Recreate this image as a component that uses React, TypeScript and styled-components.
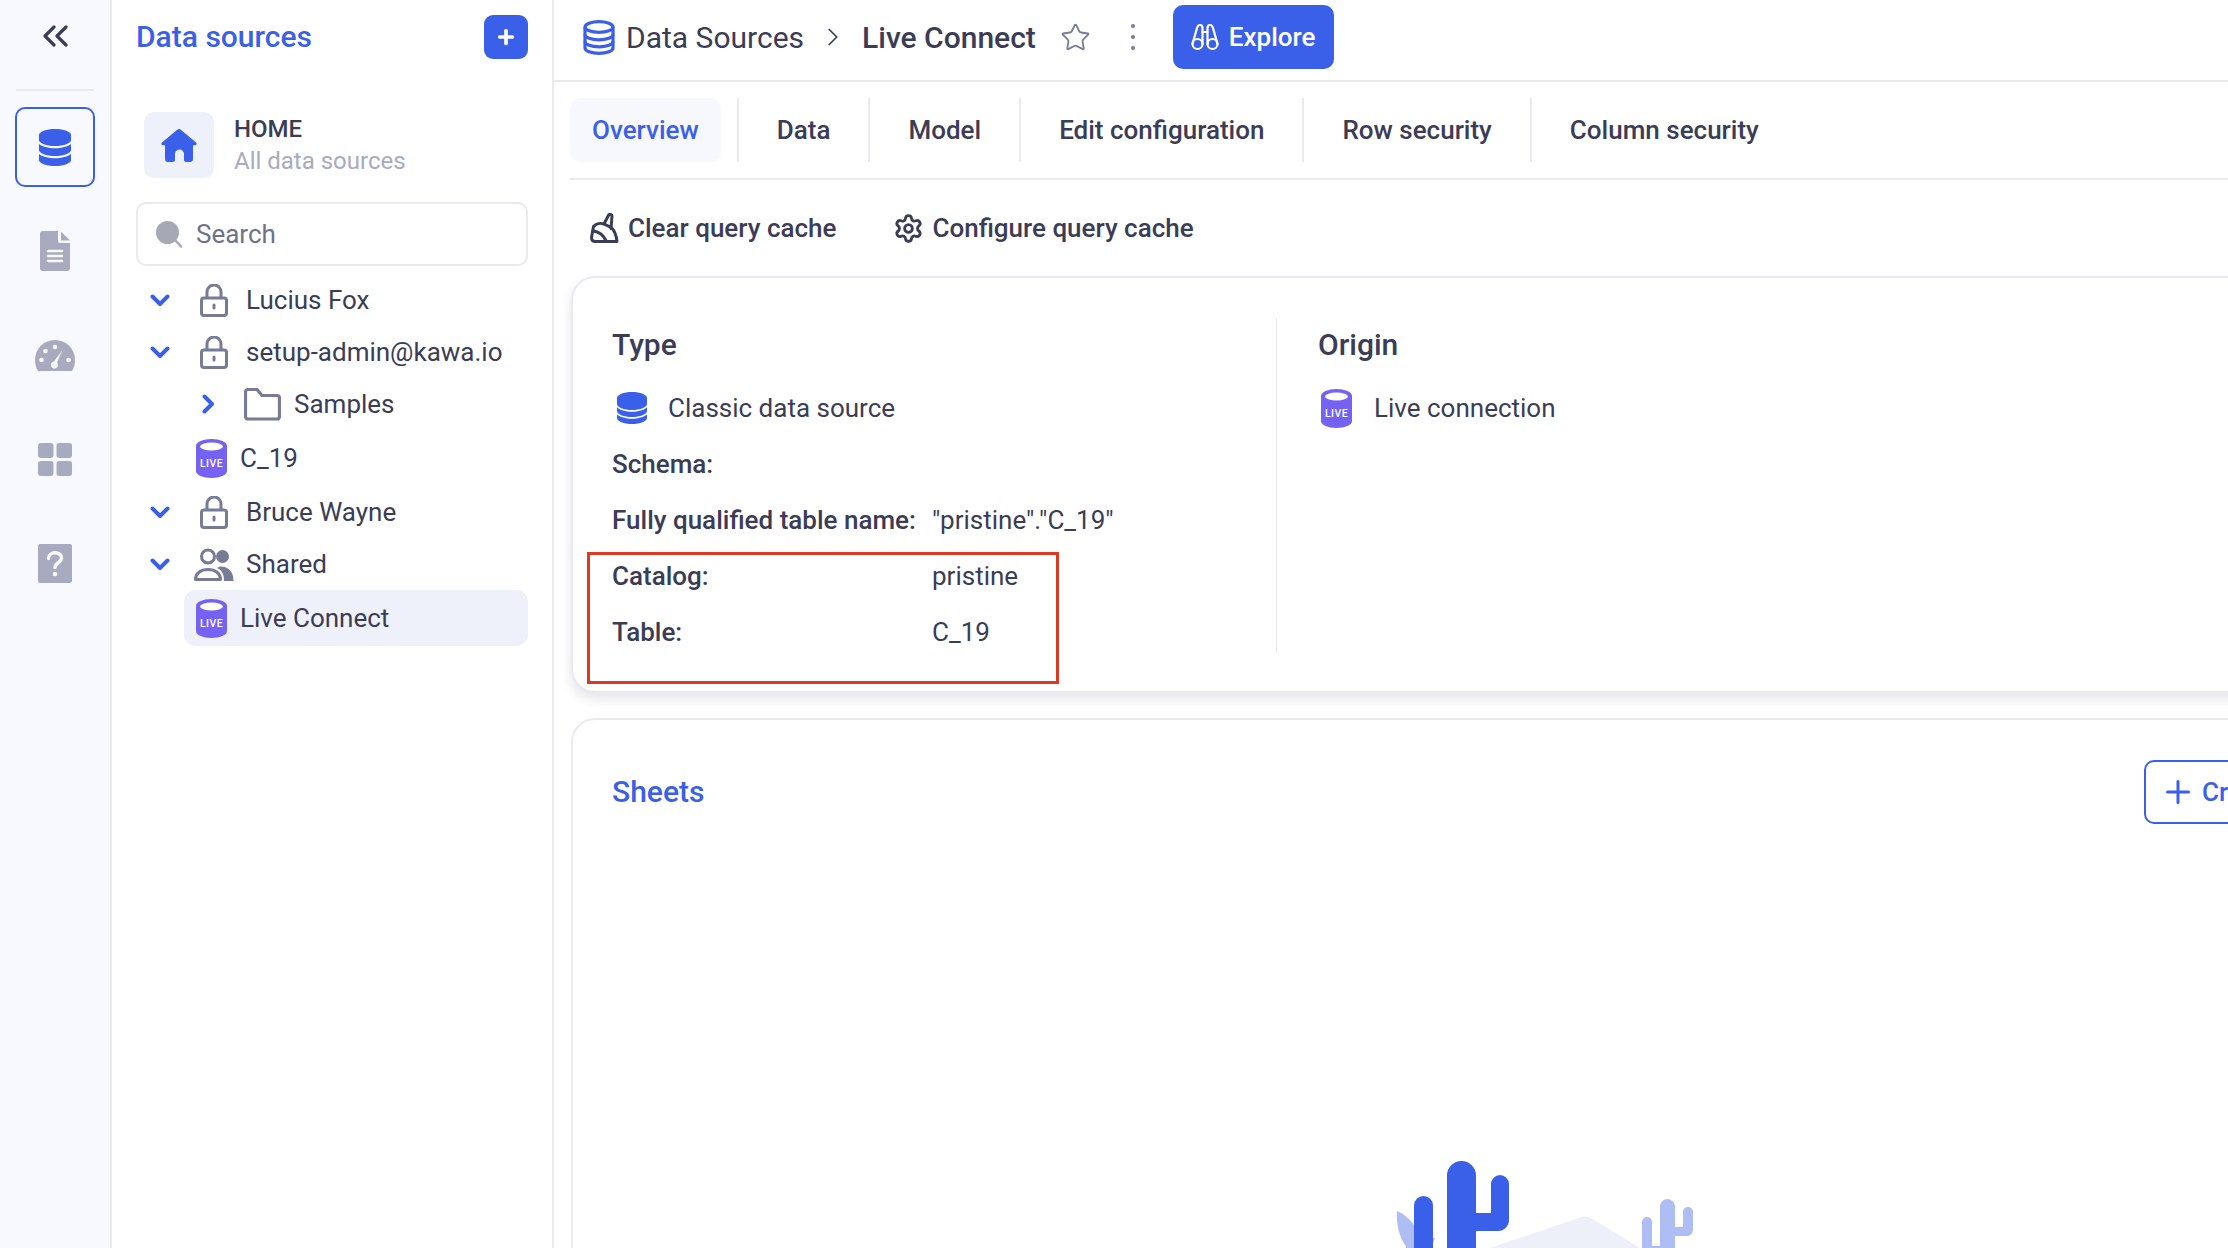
import { ReactNode } from "react";
import styled, { createGlobalStyle } from "styled-components";
import { ChevronRight, Plus, Settings, Star } from "lucide-react";

const BLUE = "#3a60ea";
const INK = "#3b3c55";
const MUTED = "#a8abc0";
const SLATE = "#787b96";
const LINE = "#e9eaf1";
const PURPLE = "#7561f2";

const GlobalStyle = createGlobalStyle`
	html, body {
		margin: 0;
		height: 100%;
		overflow: hidden;
		background: #fff;
	}
	body {
		font-family: "Roboto", "Liberation Sans", sans-serif;
		color: ${INK};
	}
	* {
		box-sizing: border-box;
	}
`;

/* ---------- icons ---------- */

function DbSolid() {
	return (
		<svg width="30" height="32" viewBox="0 0 30 32" fill={BLUE}>
			<path d="M0 6c0-3.300 6.700-6 15-6s15 2.700 15 6v6c0 3.300-6.700 6-15 6S0 15.300 0 12z" />
			<path d="M0 15.500c3 2.400 9 4.300 15 4.300s12-1.900 15-4.300V19c0 3.300-6.700 6-15 6S0 22.300 0 19z" />
			<path d="M0 22.500c3 2.400 9 4.300 15 4.300s12-1.900 15-4.300V26c0 3.300-6.700 6-15 6S0 29.300 0 26z" />
		</svg>
	);
}

function DbStack() {
	return (
		<svg width="32" height="37" viewBox="0 0 32 37" fill={BLUE}>
			<path d="M0 6c0-3.300 7.200-6 16-6s16 2.700 16 6v5c0 3.300-7.200 6-16 6S0 14.300 0 11z" />
			<path d="M0 15c3 2.500 9.500 4.300 16 4.300S29 17.500 32 15v6c0 3.300-7.200 6-16 6S0 24.300 0 21z" />
			<path d="M0 25c3 2.500 9.500 4.300 16 4.300S29 27.500 32 25v6c0 3.300-7.200 6-16 6S0 34.300 0 31z" />
		</svg>
	);
}

function DbOutline() {
	return (
		<svg width="32" height="35" viewBox="0 0 32 35" fill="none" stroke={BLUE} strokeWidth="3.200">
			<ellipse cx="16" cy="7" rx="14" ry="5.400" />
			<path d="M2 7v21c0 3 6.300 5.400 14 5.400S30 31 30 28V7" />
			<path d="M2 14.500c0 3 6.300 5.400 14 5.400s14-2.400 14-5.400" />
			<path d="M2 21.500c0 3 6.300 5.400 14 5.400s14-2.400 14-5.400" />
		</svg>
	);
}

function LiveDb() {
	return (
		<svg width="31" height="39" viewBox="0 0 31 39">
			<path
				fill={PURPLE}
				d="M0 7c0-4 7-7 15.500-7S31 3 31 7v25c0 4-7 7-15.500 7S0 36 0 32z"
			/>
			<ellipse cx="15.500" cy="7.500" rx="11.500" ry="4" fill="#fff" />
			<text
				x="15.500"
				y="28"
				textAnchor="middle"
				fontSize="10.500"
				fontWeight="500"
				fontFamily="Roboto, sans-serif"
				letterSpacing="0.400"
				fill="#fff"
			>
				LIVE
			</text>
		</svg>
	);
}

function Lock() {
	return (
		<svg width="28" height="33" viewBox="0 0 28 33" fill="none" stroke={SLATE} strokeWidth="3">
			<rect x="1.500" y="14" width="25" height="17.500" rx="2.500" />
			<path d="M7 14V8a7 7 0 0 1 14 0v6" />
			<path d="M14 21v3" strokeLinecap="round" />
		</svg>
	);
}

function People() {
	return (
		<svg width="40" height="33" viewBox="0 0 40 33" fill="none">
			<circle cx="14" cy="8.500" r="6.500" stroke={SLATE} strokeWidth="3" />
			<path
				d="M1.500 31.500c0-6 5-10 12.500-10s12.500 4 12.500 10z"
				stroke={SLATE}
				strokeWidth="3"
				strokeLinejoin="round"
			/>
			<circle cx="28.500" cy="8.500" r="6.500" fill={SLATE} />
			<path d="M26 18.500c8 0 13.500 4.500 13.500 14.500H30c0-6-1.500-11-7-13z" fill={SLATE} />
		</svg>
	);
}

function Folder() {
	return (
		<svg width="37" height="33" viewBox="0 0 37 33" fill="none" stroke={SLATE} strokeWidth="3.200" strokeLinejoin="round">
			<path d="M1.500 4a2.500 2.500 0 0 1 2.500-2.500h9l5 6h15a2.500 2.500 0 0 1 2.500 2.500v18.500a2.500 2.500 0 0 1-2.500 2.500H4a2.500 2.500 0 0 1-2.500-2.500z" />
		</svg>
	);
}

function ArrowDown() {
	return (
		<svg width="20" height="13" viewBox="0 0 20 13" fill="none" stroke={BLUE} strokeWidth="4" strokeLinecap="round" strokeLinejoin="round">
			<path d="M2.500 2.500 10 10l7.500-7.500" />
		</svg>
	);
}

function ArrowRight() {
	return (
		<svg width="13" height="20" viewBox="0 0 13 20" fill="none" stroke={BLUE} strokeWidth="4" strokeLinecap="round" strokeLinejoin="round">
			<path d="M2.500 2.500 10 10l-7.500 7.500" />
		</svg>
	);
}

function Collapse() {
	return (
		<svg width="26" height="22" viewBox="0 0 26 22" fill="none" stroke={INK} strokeWidth="3.200" strokeLinecap="round" strokeLinejoin="round">
			<path d="M12 2 3 11l9 9" />
			<path d="M24 2l-9 9 9 9" />
		</svg>
	);
}

function DocIcon() {
	return (
		<svg width="30" height="40" viewBox="0 0 30 40" fill={MUTED}>
			<path d="M3 0h15v10a2 2 0 0 0 2 2h10v25a3 3 0 0 1-3 3H3a3 3 0 0 1-3-3V3a3 3 0 0 1 3-3z" />
			<path d="M21 0.500 30 9.500h-9z" />
			<path d="M8 20h14M8 25h14M8 30h14" stroke="#f8f9fe" strokeWidth="2.500" strokeLinecap="round" />
		</svg>
	);
}

function GaugeIcon() {
	return (
		<svg width="40" height="31" viewBox="0 0 40 31" fill={MUTED}>
			<path d="M20 0a20 20 0 0 1 20 20c0 4-1 8-3 11H3c-2-3-3-7-3-11A20 20 0 0 1 20 0z" />
			<circle cx="20" cy="7" r="2.300" fill="#f8f9fe" />
			<circle cx="10.500" cy="11" r="2.300" fill="#f8f9fe" />
			<circle cx="6.500" cy="20" r="2.300" fill="#f8f9fe" />
			<circle cx="33.500" cy="20" r="2.300" fill="#f8f9fe" />
			<path d="M27.500 10 22 22.500a3.500 3.500 0 1 1-6 2.500 3.500 3.500 0 0 1 3-3.500z" fill="#f8f9fe" />
		</svg>
	);
}

function GridIcon() {
	return (
		<svg width="34" height="33" viewBox="0 0 34 33" fill={MUTED}>
			<rect width="15.500" height="15" rx="3" />
			<rect x="18.500" width="15.500" height="15" rx="3" />
			<rect y="18" width="15.500" height="15" rx="3" />
			<rect x="18.500" y="18" width="15.500" height="15" rx="3" />
		</svg>
	);
}

function HelpIcon() {
	return (
		<svg width="34" height="39" viewBox="0 0 34 39">
			<rect width="34" height="39" rx="2" fill={MUTED} />
			<path
				d="M10.500 14.500c0-3.600 3-5.800 6.500-5.800s6.500 2.200 6.500 5.300c0 4.800-6.500 4.700-6.500 9.500"
				fill="none"
				stroke="#f8f9fe"
				strokeWidth="3.400"
				strokeLinecap="round"
			/>
			<circle cx="17" cy="30" r="2.300" fill="#f8f9fe" />
		</svg>
	);
}

function HomeIcon() {
	return (
		<svg width="36" height="33" viewBox="0 0 36 33" fill={BLUE}>
			<path d="M16.500 0.600a2.300 2.300 0 0 1 3 0L35 13.500c1.300 1.100.6 2.700-.9 2.700H32v13.800a3 3 0 0 1-3 3h-4a2 2 0 0 1-2-2v-6a4.500 4.500 0 0 0-9 0v6a2 2 0 0 1-2 2H7a3 3 0 0 1-3-3V16.200H1.900c-1.500 0-2.200-1.600-.9-2.700z" />
		</svg>
	);
}

function SearchBlob() {
	return (
		<svg width="26" height="27" viewBox="0 0 26 27" fill="#a6a8b6">
			<circle cx="11.500" cy="11.500" r="11.500" />
			<path d="M19 19l6 6.500" stroke="#a6a8b6" strokeWidth="2.500" strokeLinecap="round" />
		</svg>
	);
}

function Binoculars() {
	return (
		<svg width="28" height="28" viewBox="0 0 28 28" fill="none" stroke="#fff" strokeWidth="2.200" strokeLinecap="round" strokeLinejoin="round">
			<circle cx="6.500" cy="21" r="5" />
			<circle cx="21.500" cy="21" r="5" />
			<path d="M1.500 21 6 5c.5-2 1.500-3 3-3s2.500 1 2.500 3v16" />
			<path d="M26.500 21 22 5c-.5-2-1.500-3-3-3s-2.500 1-2.500 3v16" />
			<path d="M11.500 9h5" />
		</svg>
	);
}

function Broom() {
	return (
		<svg width="29" height="30" viewBox="0 0 29 30" fill="none" stroke={INK} strokeWidth="3" strokeLinecap="round" strokeLinejoin="round">
			<path d="M14 11 18.500 2.200c.8-1.500 3.700-.9 3.500 1L21 15.500" />
			<path d="M3.500 13.500C6 10.500 10.500 9.800 14 11l6.500 3.200c3.500 1.800 6 8.500 6.500 14.300H5.500c-2.500 0-4-1.500-4-4z" />
			<path d="M3 18c5 .5 10.500 4 13.500 10.500" />
		</svg>
	);
}

function Cacti() {
	return (
		<svg width="320" height="98" viewBox="0 0 320 98">
			<path d="M100 98 190 67.500a14 14 0 0 1 12 1L250 98z" fill="#edf0f8" />
			<path d="M7 61c7 3 13 8 17 14v23h-7C9 87 6 74 7 61z" fill="#aebef5" />
			<path d="M43 88l2 0-2 5zM16 97l8-3v4h-8z" fill="#aebef5" />
			<path d="M24 98V55.500a9.500 9.500 0 0 1 19 0V98z" fill={BLUE} />
			<path
				d="M57 98V25.500a14.500 14.500 0 0 1 29 0V63h15V34a9 9 0 0 1 18 0v36a11 11 0 0 1-11 11H86v17z"
				fill={BLUE}
			/>
			<path
				d="M252 98V72a5 5 0 0 1 10 0v24h8V56.500a7.500 7.500 0 0 1 15 0V77h8V62a5 5 0 0 1 10 0v18a6 6 0 0 1-6 6h-12v12z"
				fill="#aebef5"
			/>
		</svg>
	);
}

/* ---------- page ---------- */

function TreeRow({
	depth = 0,
	open = true,
	icon,
	label,
}: {
	depth?: number;
	open?: boolean;
	icon: ReactNode;
	label: string;
}) {
	return (
		<BranchRow $depth={depth}>
			<Toggle>{open ? <ArrowDown /> : <ArrowRight />}</Toggle>
			<BranchIcon>{icon}</BranchIcon>
			<span>{label}</span>
		</BranchRow>
	);
}

export default function App() {
	return (
		<Page>
			<GlobalStyle />
			<Rail>
				<CollapseSlot>
					<Collapse />
				</CollapseSlot>
				<RailRule />
				<RailItems>
					<RailItem $active>
						<DbStack />
					</RailItem>
					<RailItem>
						<DocIcon />
					</RailItem>
					<RailItem>
						<GaugeIcon />
					</RailItem>
					<RailItem>
						<GridIcon />
					</RailItem>
					<RailItem>
						<HelpIcon />
					</RailItem>
				</RailItems>
			</Rail>

			<SidePanel>
				<PanelHeader>
					<PanelTitle>Data sources</PanelTitle>
					<AddButton>
						<Plus size={22} strokeWidth={4} color="#fff" />
					</AddButton>
				</PanelHeader>

				<HomeBlock>
					<HomeTile>
						<HomeIcon />
					</HomeTile>
					<div>
						<HomeTitle>HOME</HomeTitle>
						<HomeSubtitle>All data sources</HomeSubtitle>
					</div>
				</HomeBlock>

				<SearchBox>
					<SearchBlob />
					<span>Search</span>
				</SearchBox>

				<Tree>
					<TreeRow icon={<Lock />} label="Lucius Fox" />
					<TreeRow icon={<Lock />} label="setup-admin@kawa.io" />
					<TreeRow depth={1} open={false} icon={<Folder />} label="Samples" />
					<LeafRow>
						<LiveDb />
						<span>C_19</span>
					</LeafRow>
					<TreeRow icon={<Lock />} label="Bruce Wayne" />
					<TreeRow icon={<People />} label="Shared" />
					<LeafRow $selected>
						<LiveDb />
						<span>Live Connect</span>
					</LeafRow>
				</Tree>
			</SidePanel>

			<Main>
				<TopBar>
					<DbOutline />
					<Crumb>Data Sources</Crumb>
					<CrumbArrow>
						<ChevronRight size={30} strokeWidth={1.4} color={INK} />
					</CrumbArrow>
					<CrumbCurrent>Live Connect</CrumbCurrent>
					<StarSlot>
						<Star size={31} strokeWidth={1.4} color={SLATE} />
					</StarSlot>
					<Kebab>
						<i />
						<i />
						<i />
					</Kebab>
					<ExploreButton>
						<Binoculars />
						Explore
					</ExploreButton>
				</TopBar>

				<Content>
					<TabBar>
						<TabCell>
							<TabLabel $active>Overview</TabLabel>
						</TabCell>
						<TabCell>
							<TabLabel>Data</TabLabel>
						</TabCell>
						<TabCell>
							<TabLabel>Model</TabLabel>
						</TabCell>
						<TabCell>
							<TabLabel>Edit configuration</TabLabel>
						</TabCell>
						<TabCell>
							<TabLabel>Row security</TabLabel>
						</TabCell>
						<TabCell>
							<TabLabel>Column security</TabLabel>
						</TabCell>
					</TabBar>

					<Actions>
						<ActionItem>
							<Broom />
							Clear query cache
						</ActionItem>
						<ActionItem>
							<Settings size={31} strokeWidth={2.2} color={INK} />
							Configure query cache
						</ActionItem>
					</Actions>

					<InfoCard>
						<InfoColumn>
							<CardHeading>Type</CardHeading>
							<IconLine>
								<IconHolder $inset={5}>
									<DbSolid />
								</IconHolder>
								Classic data source
							</IconLine>
							<FieldRow>
								<FieldName>Schema:</FieldName>
							</FieldRow>
							<FieldRow>
								<FieldName>Fully qualified table name:</FieldName>
								<span>"pristine"."C_19"</span>
							</FieldRow>
							<FieldRow>
								<FieldName>Catalog:</FieldName>
								<span>pristine</span>
							</FieldRow>
							<FieldRow>
								<FieldName>Table:</FieldName>
								<span>C_19</span>
							</FieldRow>
						</InfoColumn>
						<OriginColumn>
							<CardHeading>Origin</CardHeading>
							<IconLine>
								<IconHolder $inset={3}>
									<LiveDb />
								</IconHolder>
								Live connection
							</IconLine>
						</OriginColumn>
						<Highlight />
					</InfoCard>

					<SheetsCard>
						<SheetsHeader>
							<SheetsTitle>Sheets</SheetsTitle>
							<CreateButton>
								<Plus size={36} strokeWidth={2} color={BLUE} />
								Create sheet
							</CreateButton>
						</SheetsHeader>
						<EmptyArt>
							<Cacti />
						</EmptyArt>
					</SheetsCard>
				</Content>
			</Main>
		</Page>
	);
}

const Page = styled.div`
	display: flex;
	width: 2228px;
	height: 1248px;
	overflow: hidden;
	background: #fff;
`;

const Rail = styled.nav`
	flex: 0 0 112px;
	display: flex;
	flex-direction: column;
	align-items: center;
	background: #f8f9fe;
	border-right: 2px solid ${LINE};
`;

const CollapseSlot = styled.div`
	height: 72px;
	display: flex;
	align-items: center;
	justify-content: center;
`;

const RailRule = styled.div`
	width: 78px;
	height: 2px;
	margin-top: 17px;
	background: ${LINE};
`;

const RailItems = styled.div`
	display: flex;
	flex-direction: column;
	gap: 24px;
	margin-top: 16px;
`;

const RailItem = styled.div<{ $active?: boolean }>`
	width: 80px;
	height: 80px;
	display: flex;
	align-items: center;
	justify-content: center;
	border-radius: 10px;
	border: 2px solid ${(props) => (props.$active ? BLUE : "transparent")};
`;

const SidePanel = styled.aside`
	flex: 0 0 442px;
	padding: 0 24px;
	border-right: 2px solid ${LINE};
`;

const PanelHeader = styled.div`
	height: 74px;
	display: flex;
	align-items: center;
	justify-content: space-between;
`;

const PanelTitle = styled.h1`
	margin: 0 0 2px;
	font-size: 30px;
	font-weight: 500;
	color: ${BLUE};
`;

const AddButton = styled.button`
	width: 44px;
	height: 44px;
	padding: 0;
	display: flex;
	align-items: center;
	justify-content: center;
	border: none;
	border-radius: 9px;
	background: ${BLUE};
`;

const HomeBlock = styled.div`
	display: flex;
	align-items: center;
	gap: 20px;
	margin-top: 38px;
	padding-left: 8px;
`;

const HomeTile = styled.div`
	width: 70px;
	height: 66px;
	display: flex;
	align-items: center;
	justify-content: center;
	border-radius: 10px;
	background: #eef1f9;
`;

const HomeTitle = styled.div`
	font-size: 24px;
	font-weight: 500;
	line-height: 32px;
`;

const HomeSubtitle = styled.div`
	font-size: 24px;
	line-height: 32px;
	color: ${MUTED};
`;

const SearchBox = styled.div`
	height: 64px;
	margin-top: 24px;
	padding-left: 18px;
	display: flex;
	align-items: center;
	gap: 14px;
	font-size: 26px;
	color: #6f7187;
	border: 2px solid ${LINE};
	border-radius: 10px;
`;

const Tree = styled.div`
	margin-top: 8px;
	font-size: 26px;
`;

const BranchRow = styled.div<{ $depth: number }>`
	height: 52px;
	display: flex;
	align-items: center;
	padding-left: ${(props) => 14 + props.$depth * 48}px;
`;

const Toggle = styled.div`
	flex: 0 0 20px;
	display: flex;
	align-items: center;
	justify-content: center;
	margin-right: 24px;
`;

const BranchIcon = styled.div`
	flex: 0 0 40px;
	display: flex;
	align-items: center;
	justify-content: center;
	margin-right: 12px;
`;

const LeafRow = styled.div<{ $selected?: boolean }>`
	height: 56px;
	margin-left: 48px;
	padding-left: 12px;
	display: flex;
	align-items: center;
	gap: 13px;
	border-radius: 12px;
	background: ${(props) => (props.$selected ? "#eef1f9" : "transparent")};
`;

const Main = styled.main`
	flex: 1;
	min-width: 0;
`;

const TopBar = styled.header`
	height: 82px;
	padding: 0 0 6px 29px;
	display: flex;
	align-items: center;
	border-bottom: 2px solid ${LINE};
`;

const Crumb = styled.span`
	margin-left: 11px;
	font-size: 30px;
`;

const CrumbArrow = styled.span`
	display: flex;
	margin: 0 14px 0 14px;
`;

const CrumbCurrent = styled.span`
	font-size: 30px;
	font-weight: 500;
`;

const StarSlot = styled.span`
	display: flex;
	margin-left: 24px;
`;

const Kebab = styled.span`
	display: flex;
	flex-direction: column;
	gap: 7px;
	margin-left: 40px;

	i {
		width: 4px;
		height: 4px;
		border-radius: 50%;
		background: ${SLATE};
	}
`;

const ExploreButton = styled.button`
	height: 64px;
	margin-left: 38px;
	padding: 0 19px 0 18px;
	display: flex;
	align-items: center;
	gap: 10px;
	border: none;
	border-radius: 10px;
	background: ${BLUE};
	color: #fff;
	font-family: inherit;
	font-size: 26px;
	font-weight: 500;
`;

const Content = styled.div`
	padding-left: 16px;
`;

const TabBar = styled.div`
	display: flex;
	padding: 16px 0;
	border-bottom: 2px solid ${LINE};
`;

const TabCell = styled.div`
	padding: 0 16px;
	border-right: 2px solid ${LINE};

	&:first-child {
		padding-left: 0;
	}

	&:last-child {
		border-right: none;
	}
`;

const TabLabel = styled.div<{ $active?: boolean }>`
	height: 64px;
	padding: 0 22px;
	display: flex;
	align-items: center;
	border-radius: 10px;
	font-size: 26px;
	font-weight: 500;
	color: ${(props) => (props.$active ? BLUE : INK)};
	background: ${(props) => (props.$active ? "#f6f8fe" : "transparent")};
`;

const Actions = styled.div`
	height: 96px;
	padding-left: 20px;
	display: flex;
	align-items: center;
	gap: 57px;
`;

const ActionItem = styled.div`
	display: flex;
	align-items: center;
	gap: 9px;
	font-size: 26px;
	font-weight: 500;

	& + & {
		gap: 8px;
	}
`;

const InfoCard = styled.section`
	position: relative;
	width: 1800px;
	margin-left: 1px;
	padding: 40px 0 39px 39px;
	display: flex;
	border: 2px solid ${LINE};
	border-radius: 24px;
	background: #fff;
	box-shadow: 0 6px 12px rgba(40, 44, 70, 0.12);
	font-size: 26px;
`;

const InfoColumn = styled.div`
	width: 665px;
	height: 334px;
	display: flex;
	flex-direction: column;
	gap: 16px;
	border-right: 1px solid ${LINE};
`;

const OriginColumn = styled.div`
	padding-left: 41px;
	display: flex;
	flex-direction: column;
	gap: 16px;
`;

const CardHeading = styled.h2`
	height: 54px;
	margin: 0;
	padding-bottom: 1px;
	display: flex;
	align-items: center;
	font-size: 30px;
	font-weight: 500;
`;

const IconLine = styled.div`
	height: 40px;
	display: flex;
	align-items: center;
`;

const IconHolder = styled.span<{ $inset: number }>`
	flex: 0 0 56px;
	display: flex;
	align-items: center;
	padding-left: ${(props) => props.$inset}px;
`;

const FieldRow = styled.div`
	height: 40px;
	display: flex;
	align-items: center;
`;

const FieldName = styled.span`
	width: 320px;
	font-weight: 500;
`;

const Highlight = styled.div`
	position: absolute;
	left: 14px;
	top: 274px;
	width: 472px;
	height: 132px;
	border: 3px solid #dc3a22;
	pointer-events: none;
`;

const SheetsCard = styled.section`
	width: 1800px;
	height: 600px;
	margin: 25px 0 0 1px;
	padding: 40px 0 0 39px;
	border: 2px solid ${LINE};
	border-radius: 24px;
	background: #fff;
`;

const SheetsHeader = styled.div`
	display: grid;
	grid-template-columns: 1532px auto;
	align-items: center;
	justify-content: start;
`;

const SheetsTitle = styled.h2`
	margin: 0 0 2px;
	font-size: 30px;
	font-weight: 500;
	color: ${BLUE};
`;

const CreateButton = styled.button`
	height: 64px;
	padding: 0 22px 0 14px;
	display: flex;
	align-items: center;
	gap: 6px;
	border: 2px solid ${BLUE};
	border-radius: 10px;
	background: #fff;
	color: ${BLUE};
	font-family: inherit;
	font-size: 26px;
	font-weight: 500;
	white-space: nowrap;
`;

const EmptyArt = styled.div`
	display: flex;
	margin: 326px 0 0 778px;
`;
